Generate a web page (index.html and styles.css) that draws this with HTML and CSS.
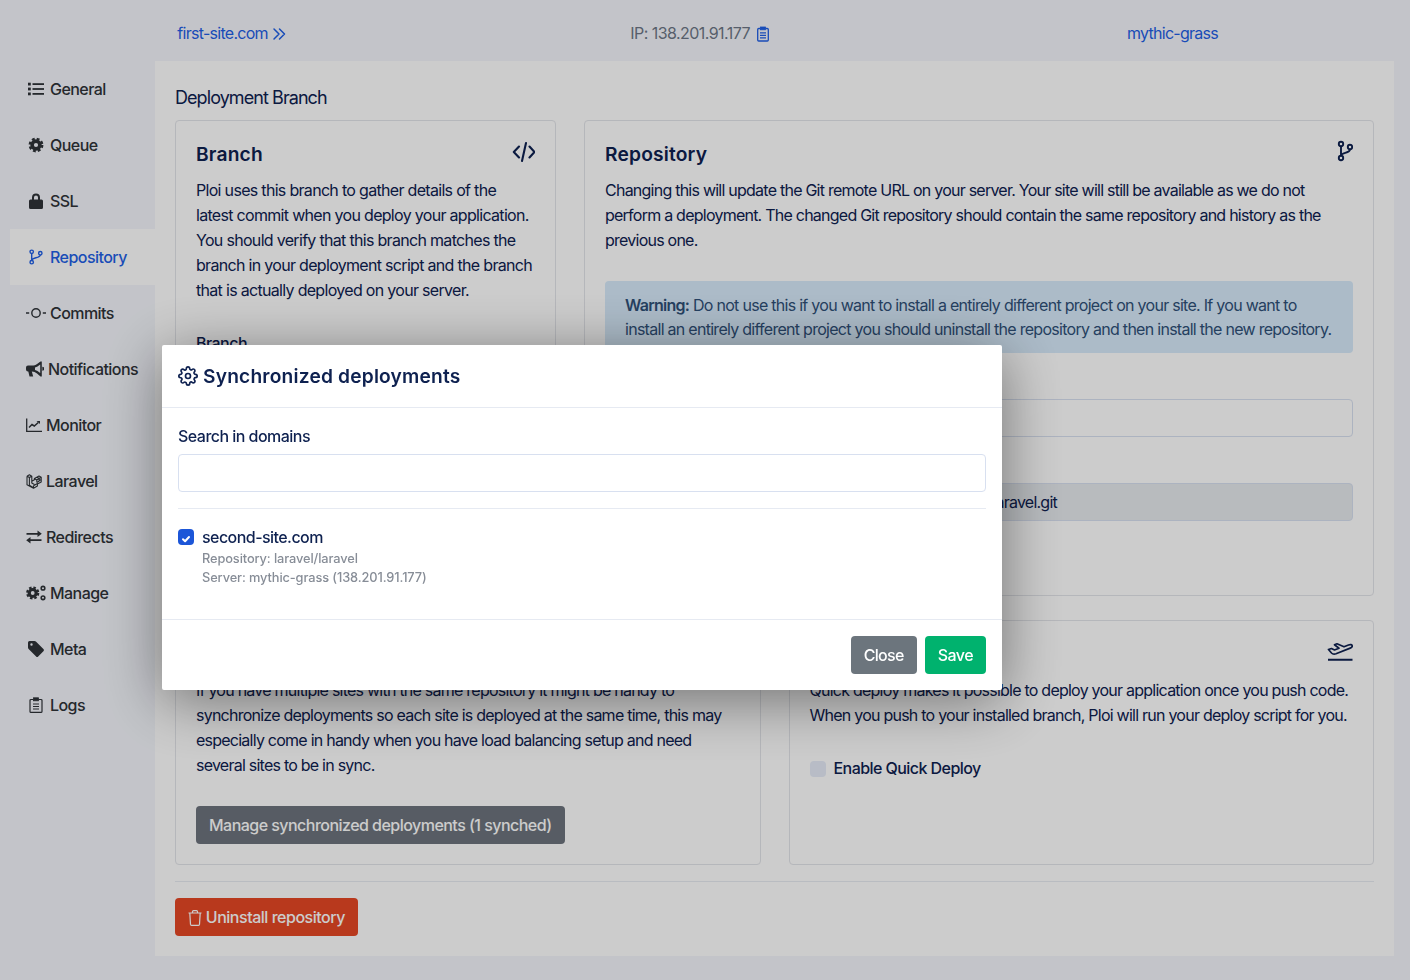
FILE: index.html
```html
<!DOCTYPE html>
<html lang="en">
<head>
    <meta charset="UTF-8">
    <title>Repository</title>
    <link rel="stylesheet" href="styles.css">
</head>
<body>
    <div class="topbar">
        <div class="center"><a class="link">first-site.com</a> <svg class="ic-chev blue" viewBox="0 0 14 14" fill="none" stroke="currentColor" stroke-width="1.5" stroke-linecap="round" stroke-linejoin="round"><path d="M2 2 7 7 2 12M7.500 2l5 5-5 5"/></svg></div>
        <div class="center"><span class="muted">IP: 138.201.91.177</span> <svg class="ic-clip blue" viewBox="0 0 12 16" fill="none" stroke="currentColor" stroke-width="1.3"><path d="M3.500 2.500H1.700a1 1 0 0 0-1 1V14a1 1 0 0 0 1 1h8.600a1 1 0 0 0 1-1V3.500a1 1 0 0 0-1-1H8.500"/><rect x="3.500" y="1" width="5" height="2.800" fill="currentColor" stroke-width=".8"/><path d="M3 6.800h6M3 9.300h6M3 11.800h6" stroke-width="1.200"/></svg></div>
        <div class="center"><a class="link">mythic-grass</a></div>
    </div>

    <div class="layout">
        <nav class="sidebar">
            <a class="nav-item"><svg class="nav-ic" viewBox="0 0 16 16" fill="currentColor"><rect x="0" y="1.700" width="2.800" height="2.800"/><rect x="0" y="6.600" width="2.800" height="2.800"/><rect x="0" y="11.500" width="2.800" height="2.800"/><rect x="4.500" y="2.200" width="11.500" height="1.800"/><rect x="4.500" y="7.100" width="11.500" height="1.800"/><rect x="4.500" y="12" width="11.500" height="1.800"/></svg>General</a>
            <a class="nav-item"><svg class="nav-ic" viewBox="0 0 16 16" fill="none" stroke="currentColor"><circle cx="8" cy="8" r="3.900" stroke-width="3.600"/><circle cx="8" cy="8" r="6.200" stroke-width="2.400" stroke-dasharray="2.800 2.070"/></svg>Queue</a>
            <a class="nav-item"><svg class="nav-ic" viewBox="0 0 16 16"><path fill="currentColor" fill-rule="evenodd" d="M2.500 6.500H4V4.500a4 4 0 0 1 8 0v2h1.500A1.500 1.500 0 0 1 15 8v6.500a1.500 1.500 0 0 1-1.500 1.500h-11A1.500 1.500 0 0 1 1 14.500V8a1.500 1.500 0 0 1 1.500-1.500zM6 6.500h4v-2a2 2 0 0 0-4 0z"/></svg>SSL</a>
            <a class="nav-item active"><svg class="nav-ic" viewBox="0 0 16 16" fill="none" stroke="currentColor" stroke-width="1.400"><circle cx="3.700" cy="2.800" r="1.700"/><circle cx="3.700" cy="13.200" r="1.700"/><circle cx="12.300" cy="4.200" r="1.700"/><path d="M3.700 4.500v7M12.300 5.900c0 3.400-8.600 2.200-8.600 5.400"/></svg>Repository</a>
            <a class="nav-item"><svg class="nav-ic" viewBox="0 0 20 16" fill="none" stroke="currentColor" stroke-width="1.400"><circle cx="10" cy="8" r="4.200"/><path d="M0 8h3.200M16.800 8H20"/></svg>Commits</a>
            <a class="nav-item ic-18"><svg class="nav-ic" viewBox="0 0 18 16"><path fill="currentColor" fill-rule="evenodd" d="M14.500.6h1.300v14.800h-1.300L11 12.500c-1.500-1.100-3.200-1.800-5.200-1.900l1.400 4.900H3.500l-1.200-5H2a2 2 0 0 1-2-2V6.500a2 2 0 0 1 2-2h4c2 0 3.600-.5 5-1.500zM14.200 3.500l-2.700 2c-.8.500-1.600.8-2.500 1V9c1 .2 1.800.5 2.500 1l2.700 2z"/><path fill="currentColor" d="M16.300 5.800a2 2 0 0 1 0 4z"/></svg>Notifications</a>
            <a class="nav-item ic-16"><svg class="nav-ic" viewBox="0 0 16 16" fill="none" stroke="currentColor" stroke-width="1.300"><path d="M.7 1.500v12.800H16"/><path d="M3 10.500l3-3 2.300 1.500 4-3.500" stroke-width="1.500"/><path d="M10.500 4h3.500v3z" fill="currentColor" stroke="none"/></svg>Monitor</a>
            <a class="nav-item ic-16"><svg class="nav-ic" viewBox="0 0 16 16" fill="none" stroke="currentColor" stroke-width="1.100" stroke-linejoin="round"><path d="M1 3.200 3.400 1.800 5.800 3.200V10l2.600 1.500M1 3.200l2.400 1.400 2.400-1.400M3.400 4.600v7.700l4.100 2.400M1 3.200v8.600l6.500 3.400 3.900-2.200v-2.500l-3.900 2.200M7.500 12.700v2.500M5.800 8.300l2.600-1.500V5.600l2.400-1.400 2.400 1.400v2.400l-2.400 1.400M8.400 5.600l2.400 1.400v2.400M10.800 7l2.400-1.400M10.800 4.200 13 3l2.200 1.200v2.400L13 7.800M13 5.400l2.200-1.200M15.200 6.600V9l-3.800 2"/></svg>Laravel</a>
            <a class="nav-item ic-16"><svg class="nav-ic" viewBox="0 0 16 16" fill="currentColor"><path d="M11.500 1.500 15.800 4.800 11.500 8.100V5.700H.5V3.900h11zM4.500 7.900v2.400h11v1.800h-11v2.400L.2 11.200z"/></svg>Redirects</a>
            <a class="nav-item"><svg class="nav-ic" viewBox="0 0 20 16" fill="none" stroke="currentColor"><circle cx="6.700" cy="8" r="3.500" stroke-width="3.200"/><circle cx="6.700" cy="8" r="5.500" stroke-width="2.200" stroke-dasharray="2.500 1.820"/><circle cx="17" cy="3.200" r="1.800" stroke-width="1.600"/><circle cx="17" cy="12.800" r="1.800" stroke-width="1.600"/></svg>Manage</a>
            <a class="nav-item"><svg class="nav-ic" viewBox="0 0 16 16"><path fill="currentColor" fill-rule="evenodd" d="M0 1.500A1.500 1.500 0 0 1 1.500 0h5a2 2 0 0 1 1.400.6l7.500 7.500a1.500 1.500 0 0 1 0 2.100l-5.200 5.200a1.500 1.500 0 0 1-2.100 0L.6 7.900A2 2 0 0 1 0 6.500zM3.500 2.300a1.200 1.200 0 1 0 0 2.400 1.200 1.200 0 0 0 0-2.400z"/></svg>Meta</a>
            <a class="nav-item"><svg class="nav-ic" viewBox="0 0 16 16" fill="none" stroke="currentColor" stroke-width="1.200"><path d="M5.500 2.500H3a1 1 0 0 0-1 1V14.400a1 1 0 0 0 1 1h10a1 1 0 0 0 1-1V3.500a1 1 0 0 0-1-1h-2.500"/><rect x="5.500" y=".8" width="5" height="3" fill="currentColor" stroke-width=".8"/><path d="M5 7h6M5 9.500h6M5 12h6"/></svg>Logs</a>
        </nav>

        <main class="panel">
            <h2 class="page-title">Deployment Branch</h2>
            <div class="row row-top">
                <section class="card card-branch">
                    <div class="card-head"><h3>Branch</h3>
                        <svg class="card-ic" viewBox="0 0 24 24" fill="none" stroke="currentColor" stroke-width="2.100" stroke-linecap="round" stroke-linejoin="round"><path d="M8 8.500 2.800 14 8 19.500M18.500 8.500l5 5.500-5 5.500M15 5l-4 18"/></svg>
                    </div>
                    <p>Ploi uses this branch to gather details of the latest commit when you deploy your application. You should verify that this branch matches the branch in your deployment script and the branch that is actually deployed on your server.</p>
                    <label class="label">Branch</label>
                </section>
                <section class="card">
                    <div class="card-head"><h3>Repository</h3>
                        <svg class="card-ic" viewBox="0 0 24 24" fill="none" stroke="currentColor" stroke-width="1.900"><circle cx="12" cy="6" r="2.200"/><circle cx="12" cy="20" r="2.200"/><circle cx="21" cy="9" r="2.200"/><path d="M12 8.200v9.600M21 11.200c0 4.400-9 2.800-9 6.600"/></svg>
                    </div>
                    <p>Changing this will update the Git remote URL on your server. Your site will still be available as we do not perform a deployment. The changed Git repository should contain the same repository and history as the previous one.</p>
                    <div class="warning"><strong>Warning:</strong> Do not use this if you want to install a entirely different project on your site. If you want to install an entirely different project you should uninstall the repository and then install the new repository.</div>
                    <div class="input spaced"></div>
                    <div class="input spaced disabled">https://github.com/laravel/laravel.git</div>
                </section>
            </div>
            <div class="row row-bottom">
                <section class="card">
                    <div class="card-head"></div>
                    <p>If you have multiple sites with the same repository it might be handy to synchronize deployments so each site is deployed at the same time, this may especially come in handy when you have load balancing setup and need several sites to be in sync.</p>
                    <button class="btn btn-dark btn-manage">Manage synchronized deployments (1 synched)</button>
                </section>
                <section class="card">
                    <div class="card-head head-end">
                        <svg class="card-ic plane" viewBox="0 0 26 20" fill="none" stroke="currentColor" stroke-width="1.700" stroke-linejoin="round"><path d="M1.500 7.500 4.500 6.500 7.500 8 12 6.200 7.500 2.800 10 1.800l7 3L21.500 3c2-.8 3.500-.3 3.700.7.200 1-.8 1.900-2 2.400L9 11.800c-2 .7-3.500.3-4.500-.8z"/><path d="M1 17.800h24.500" stroke-width="2"/></svg>
                    </div>
                    <p>Quick deploy makes it possible to deploy your application once you push code. When you push to your installed branch, Ploi will run your deploy script for you.</p>
                    <div class="check-row"><span class="check-off"></span><span class="check-label">Enable Quick Deploy</span></div>
                </section>
            </div>
            <div class="danger-row">
                <button class="btn btn-danger"><svg class="ic-trash" viewBox="0 0 14 16" fill="none" stroke="currentColor" stroke-width="1.200"><path d="M.5 3h13M4.500 3V1.700a1 1 0 0 1 1-1h3a1 1 0 0 1 1 1V3M1.800 3l.7 11.400a1 1 0 0 0 1 .9h7a1 1 0 0 0 1-.9L12.200 3"/></svg> Uninstall repository</button>
            </div>
        </main>
    </div>

    <div class="backdrop"></div>
    <div class="modal">
        <div class="modal-head">
            <svg class="modal-ic" viewBox="0 0 24 24" fill="none" stroke="currentColor" stroke-width="2" stroke-linecap="round" stroke-linejoin="round"><circle cx="12" cy="12" r="3"/><path d="M19.4 15a1.65 1.65 0 0 0 .33 1.82l.06.06a2 2 0 0 1 0 2.83 2 2 0 0 1-2.83 0l-.06-.06a1.65 1.65 0 0 0-1.82-.33 1.65 1.65 0 0 0-1 1.51V21a2 2 0 0 1-2 2 2 2 0 0 1-2-2v-.09A1.65 1.65 0 0 0 9 19.4a1.65 1.65 0 0 0-1.82.33l-.06.06a2 2 0 0 1-2.83 0 2 2 0 0 1 0-2.83l.06-.06a1.65 1.65 0 0 0 .33-1.82 1.65 1.65 0 0 0-1.51-1H3a2 2 0 0 1-2-2 2 2 0 0 1 2-2h.09A1.65 1.65 0 0 0 4.6 9a1.65 1.65 0 0 0-.33-1.82l-.06-.06a2 2 0 0 1 0-2.83 2 2 0 0 1 2.83 0l.06.06a1.65 1.65 0 0 0 1.82.33H9a1.65 1.65 0 0 0 1-1.51V3a2 2 0 0 1 2-2 2 2 0 0 1 2 2v.09a1.65 1.65 0 0 0 1 1.51 1.65 1.65 0 0 0 1.82-.33l.06-.06a2 2 0 0 1 2.83 0 2 2 0 0 1 0 2.83l-.06.06a1.65 1.65 0 0 0-.33 1.82V9a1.65 1.65 0 0 0 1.51 1H21a2 2 0 0 1 2 2 2 2 0 0 1-2 2h-.09a1.65 1.65 0 0 0-1.51 1z"/></svg>
            <h3>Synchronized deployments</h3>
        </div>
        <div class="modal-body">
            <label class="label-modal">Search in domains</label>
            <div class="input"></div>
            <hr class="modal-rule">
            <div class="site-row">
                <span class="check-on"><svg viewBox="0 0 16 16" fill="none" stroke="#fff" stroke-width="2" stroke-linecap="round" stroke-linejoin="round"><path d="M5 8.200 7.100 10.200 11 6"/></svg></span>
                <div>
                    <div class="site-name">second-site.com</div>
                    <div class="site-meta">Repository: laravel/laravel</div>
                    <div class="site-meta">Server: mythic-grass (138.201.91.177)</div>
                </div>
            </div>
        </div>
        <div class="modal-foot">
            <button class="btn btn-close">Close</button>
            <button class="btn btn-save">Save</button>
        </div>
    </div>
</body>
</html>
```

FILE: styles.css
```css
* {
    margin: 0;
    padding: 0;
    box-sizing: border-box;
}

html, body {
    height: 980px;
    overflow: hidden;
}

body {
    font-family: Inter, "Noto Sans", sans-serif;
    font-size: 16px;
    line-height: 25px;
    letter-spacing: -0.76px;
    color: #0e2150;
    background: #f4f6fc;
}

.topbar {
    display: grid;
    grid-template-columns: 463px 473px 473px;
    height: 61px;
    align-items: center;
    padding-top: 5px;
}

.center {
    text-align: center;
}

.link, .blue {
    color: #1f5fe6;
}

.link {
    letter-spacing: -0.72px;
}

.muted {
    color: #6d7686;
    letter-spacing: -0.55px;
}

.ic-chev {
    width: 14px;
    height: 14px;
    vertical-align: -2px;
}

.ic-clip {
    width: 12px;
    height: 16px;
    margin-left: 3px;
    vertical-align: -3px;
}

.ic-trash {
    width: 14px;
    height: 16px;
    vertical-align: -3px;
}

.layout {
    display: flex;
    padding-right: 16px;
}

.sidebar {
    width: 155px;
    flex-shrink: 0;
    padding-left: 10px;
}

.nav-item {
    display: flex;
    align-items: center;
    height: 56px;
    padding-left: 16px;
    color: #2f3338;
    font-weight: 500;
    letter-spacing: -0.55px;
    gap: 4px;
    white-space: nowrap;
}

.nav-ic {
    width: 20px;
    height: 16px;
    flex-shrink: 0;
}

.ic-18 .nav-ic {
    width: 18px;
}

.ic-16 .nav-ic {
    width: 16px;
}

.nav-item.active {
    background: #ffffff;
    color: #1f5fe6;
}

.panel {
    flex: 1;
    height: 895px;
    background: #ffffff;
    padding: 24px 20px 20px;
}

.page-title {
    font-size: 18px;
    font-weight: 400;
    line-height: 25px;
    letter-spacing: -0.93px;
    margin-bottom: 10px;
}

.row {
    display: grid;
    gap: 28px;
}

.row-top {
    grid-template-columns: 381px 1fr;
    height: 476px;
    margin-bottom: 24px;
}

.row-bottom {
    grid-template-columns: 1fr 1fr;
    height: 245px;
}

.card {
    border: 1px solid #e3e5ea;
    border-radius: 4px;
    padding: 21px 20px 20px;
    overflow: hidden;
}

.card-branch p {
    letter-spacing: -0.69px;
}

.card-head {
    display: flex;
    justify-content: space-between;
    align-items: flex-start;
    height: 25px;
    margin-bottom: 11px;
}

.head-end {
    justify-content: flex-end;
}

.card-head h3, .modal-head h3 {
    font-size: 19.2px;
    font-weight: 600;
    line-height: 25px;
    letter-spacing: 0.18px;
}

.card-ic {
    width: 24px;
    height: 24px;
    margin-top: -4px;
}

.card-ic.plane {
    width: 26px;
    height: 20px;
    margin-top: 0;
}

.label {
    display: block;
    font-weight: 500;
    letter-spacing: -0.53px;
    margin-top: 28px;
}

.input {
    height: 38px;
    border: 1px solid #d8e0f0;
    border-radius: 4px;
    background: #fff;
}

.input.spaced {
    margin-top: 46px;
}

.input.disabled {
    background: #e6eaee;
    padding: 6px 295px 6px 12px;
    text-align: right;
}

.warning {
    margin-top: 28px;
    padding: 12px 20px;
    line-height: 24px;
    letter-spacing: -0.72px;
    background: #d7eafa;
    color: #2f5078;
    border-radius: 4px;
}

.warning strong {
    font-weight: 600;
}

.btn {
    display: inline-block;
    height: 38px;
    border: 0;
    border-radius: 4px;
    padding: 0 13px;
    font-family: inherit;
    font-size: 16px;
    font-weight: 500;
    letter-spacing: -0.53px;
    color: #fff;
}

.btn-dark {
    background: #6d747d;
}

.btn-manage {
    margin-top: 28px;
}

.check-row {
    display: flex;
    align-items: center;
    gap: 8px;
    margin-top: 28px;
}

.check-off {
    width: 16px;
    height: 16px;
    border-radius: 4px;
    background: #e6ecf8;
}

.check-label {
    font-weight: 500;
    letter-spacing: -0.56px;
}

.danger-row {
    border-top: 1px solid #e8ebf2;
    margin-top: 16px;
    padding-top: 16px;
}

.btn-danger {
    background: #e74825;
    letter-spacing: -0.48px;
}

.backdrop {
    position: fixed;
    inset: 0;
    background: rgba(0, 0, 0, 0.2);
}

.modal {
    position: fixed;
    top: 345px;
    left: 162px;
    width: 840px;
    background: #fff;
    box-shadow: 0 10px 60px rgba(0, 0, 0, 0.45);
    border-radius: 2px;
}

.modal-head {
    display: flex;
    align-items: center;
    gap: 5px;
    height: 63px;
    padding: 0 16px;
    border-bottom: 1px solid #e6eaf2;
}

.modal-ic {
    width: 20px;
    height: 20px;
}

.modal-body {
    padding: 16px 16px 0;
    height: 211px;
}

.label-modal {
    display: block;
    font-weight: 500;
    letter-spacing: -0.53px;
    margin-bottom: 5px;
}

.modal-rule {
    border: 0;
    border-top: 1px solid #e6eaf2;
    margin: 16px 0;
}

.site-row {
    display: flex;
    gap: 8px;
}

.check-on {
    width: 16px;
    height: 16px;
    margin-top: 4px;
    border-radius: 4px;
    background: #1c56d8;
}

.site-name {
    font-weight: 500;
    line-height: 24px;
    letter-spacing: -0.55px;
}

.site-meta {
    font-size: 12.8px;
    line-height: 19px;
    letter-spacing: -0.1px;
    font-weight: 500;
    color: #878d97;
}

.modal-foot {
    display: flex;
    justify-content: flex-end;
    gap: 8px;
    height: 71px;
    padding: 16px;
    border-top: 1px solid #e6eaf2;
}

.btn-close {
    background: #6c757d;
    letter-spacing: -0.7px;
}

.btn-save {
    background: #00b26e;
}
```
